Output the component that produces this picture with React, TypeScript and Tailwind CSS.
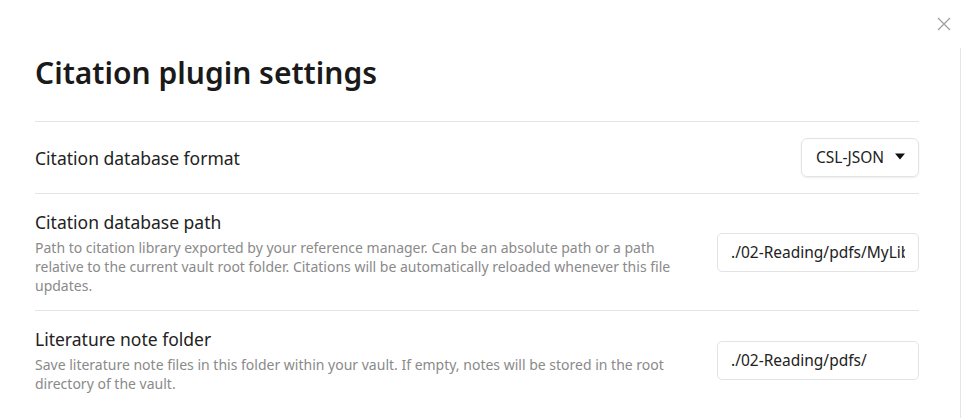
import React from "react";

const font = { fontFamily: '"Noto Sans", "Open Sans", sans-serif' };

function Row({
  name,
  desc,
  control,
  className,
}: {
  name: string;
  desc?: string;
  control: React.ReactNode;
  className?: string;
}) {
  return (
    <div className={"flex items-center border-t border-[#e3e3e3] " + (className || "")}>
      <div className="flex-1 mr-[28px]">
        <div className="text-[17.5px] leading-[24px] text-[#222222]">{name}</div>
        {desc && <div className="mt-[4px] text-[14px] leading-[19px] text-[#8a8a8a]">{desc}</div>}
      </div>
      <div className="shrink-0">{control}</div>
    </div>
  );
}

function TextBox({ value }: { value: string }) {
  return (
    <input
      readOnly
      value={value}
      className="w-[202px] h-[39px] rounded-[5px] border border-[#e3e3e3] px-[13px] text-[15.5px] text-[#222222] bg-white outline-none"
      style={font}
    />
  );
}

export default function App() {
  return (
    <div className="w-[961px] h-[418px] bg-white overflow-hidden relative flex" style={font}>
      <div className="flex-1 pl-[35px] pr-[41px]">
        <h1 className="mt-[53px] text-[30px] leading-[40px] font-semibold text-[#1a1a1a]">Citation plugin settings</h1>
        <div className="mt-[28px]">
          <Row
            className="h-[72px]"
            name="Citation database format"
            control={
              <div className="w-[118px] h-[39px] rounded-[6px] border border-[#e3e3e3] shadow-[0_1px_2px_rgba(0,0,0,0.08)] flex items-center pl-[14px] pr-[13px] justify-between text-[15.5px] text-[#222222]">
                <span>CSL-JSON</span>
                <svg width="10" height="7" viewBox="0 0 10 7" className="-mt-[3px]"><path d="M0 0.5h10L5 6.5z" fill="#111" /></svg>
              </div>
            }
          />
          <Row
            className="h-[117px]"
            name="Citation database path"
            desc="Path to citation library exported by your reference manager. Can be an absolute path or a path relative to the current vault root folder. Citations will be automatically reloaded whenever this file updates."
            control={<TextBox value="./02-Reading/pdfs/MyLibrary.json" />}
          />
          <Row
            className="h-[99px]"
            name="Literature note folder"
            desc="Save literature note files in this folder within your vault. If empty, notes will be stored in the root directory of the vault."
            control={<TextBox value="./02-Reading/pdfs/" />}
          />
        </div>
      </div>
      <div className="w-px mt-[48px] bg-[#e6e6e6]" />
      <button className="absolute right-[10px] top-[17px] w-[14px] h-[14px] flex items-center justify-center">
        <svg width="14" height="14" viewBox="0 0 14 14" fill="none" stroke="#a0a0a0" strokeWidth="1.3">
          <path d="M1 1l12 12M13 1L1 13" />
        </svg>
      </button>
    </div>
  );
}
